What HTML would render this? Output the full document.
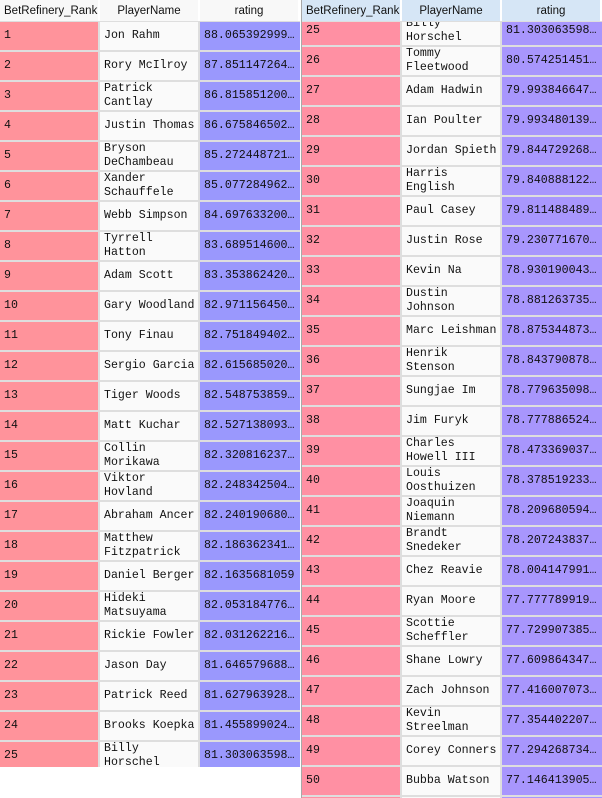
<!DOCTYPE html>
<html><head><meta charset="utf-8"><style>
*{margin:0;padding:0;box-sizing:border-box}
body{width:602px;height:798px;background:#fff;position:relative;overflow:hidden;font-family:"Liberation Mono",monospace;font-size:11.6px;color:#111}
.t{position:absolute;top:0;width:300px;overflow:hidden}
.L{left:0;height:767px}
.R{left:301px;width:301px;height:798px;border-left:1px solid #a8a8a8}
.rows{position:absolute;left:0;width:100%}
.r{display:flex;height:30px;border-bottom:2px solid #dedede}
.r div{height:28px;display:flex;align-items:center;padding-left:4px;line-height:14px;white-space:nowrap;overflow:hidden}
.a{width:100px;border-right:2px solid #dedede}
.n{width:100px;border-right:2px solid #dedede;background:#fafafa;white-space:normal!important}
.v{width:100px}
.L .a{background:#ff939b}.L .v{background:#9a98fd}
.R .a{background:#ff90a3}.R .v{background:#a896fd}
.h{position:absolute;top:0;left:0;width:100%;height:22px;display:flex;background:#f8f8f8;border-bottom:1px solid #dedede;font-family:"Liberation Sans",sans-serif;font-size:11.5px;z-index:2}
.R .h{background:#d6e6f6}
.h div{width:100px;display:flex;align-items:center;justify-content:center;border-right:2px solid #fff;white-space:nowrap;overflow:hidden}
.h div:first-child{justify-content:flex-start;padding-left:4px}
</style></head><body>
<div class="t L"><div class="h"><div>BetRefinery_Rank</div><div>PlayerName</div><div>rating</div></div>
<div class="rows" style="top:22px">
<div class="r"><div class="a">1</div><div class="n">Jon Rahm</div><div class="v">88.065392999…</div></div>
<div class="r"><div class="a">2</div><div class="n">Rory McIlroy</div><div class="v">87.851147264…</div></div>
<div class="r"><div class="a">3</div><div class="n">Patrick Cantlay</div><div class="v">86.815851200…</div></div>
<div class="r"><div class="a">4</div><div class="n">Justin Thomas</div><div class="v">86.675846502…</div></div>
<div class="r"><div class="a">5</div><div class="n">Bryson DeChambeau</div><div class="v">85.272448721…</div></div>
<div class="r"><div class="a">6</div><div class="n">Xander Schauffele</div><div class="v">85.077284962…</div></div>
<div class="r"><div class="a">7</div><div class="n">Webb Simpson</div><div class="v">84.697633200…</div></div>
<div class="r"><div class="a">8</div><div class="n">Tyrrell Hatton</div><div class="v">83.689514600…</div></div>
<div class="r"><div class="a">9</div><div class="n">Adam Scott</div><div class="v">83.353862420…</div></div>
<div class="r"><div class="a">10</div><div class="n">Gary Woodland</div><div class="v">82.971156450…</div></div>
<div class="r"><div class="a">11</div><div class="n">Tony Finau</div><div class="v">82.751849402…</div></div>
<div class="r"><div class="a">12</div><div class="n">Sergio Garcia</div><div class="v">82.615685020…</div></div>
<div class="r"><div class="a">13</div><div class="n">Tiger Woods</div><div class="v">82.548753859…</div></div>
<div class="r"><div class="a">14</div><div class="n">Matt Kuchar</div><div class="v">82.527138093…</div></div>
<div class="r"><div class="a">15</div><div class="n">Collin Morikawa</div><div class="v">82.320816237…</div></div>
<div class="r"><div class="a">16</div><div class="n">Viktor Hovland</div><div class="v">82.248342504…</div></div>
<div class="r"><div class="a">17</div><div class="n">Abraham Ancer</div><div class="v">82.240190680…</div></div>
<div class="r"><div class="a">18</div><div class="n">Matthew Fitzpatrick</div><div class="v">82.186362341…</div></div>
<div class="r"><div class="a">19</div><div class="n">Daniel Berger</div><div class="v">82.1635681059</div></div>
<div class="r"><div class="a">20</div><div class="n">Hideki Matsuyama</div><div class="v">82.053184776…</div></div>
<div class="r"><div class="a">21</div><div class="n">Rickie Fowler</div><div class="v">82.031262216…</div></div>
<div class="r"><div class="a">22</div><div class="n">Jason Day</div><div class="v">81.646579688…</div></div>
<div class="r"><div class="a">23</div><div class="n">Patrick Reed</div><div class="v">81.627963928…</div></div>
<div class="r"><div class="a">24</div><div class="n">Brooks Koepka</div><div class="v">81.455899024…</div></div>
<div class="r"><div class="a">25</div><div class="n">Billy Horschel</div><div class="v">81.303063598…</div></div>
</div></div>
<div class="t R"><div class="h"><div>BetRefinery_Rank</div><div>PlayerName</div><div>rating</div></div>
<div class="rows" style="top:17px">
<div class="r"><div class="a">25</div><div class="n">Billy Horschel</div><div class="v">81.303063598…</div></div>
<div class="r"><div class="a">26</div><div class="n">Tommy Fleetwood</div><div class="v">80.574251451…</div></div>
<div class="r"><div class="a">27</div><div class="n">Adam Hadwin</div><div class="v">79.993846647…</div></div>
<div class="r"><div class="a">28</div><div class="n">Ian Poulter</div><div class="v">79.993480139…</div></div>
<div class="r"><div class="a">29</div><div class="n">Jordan Spieth</div><div class="v">79.844729268…</div></div>
<div class="r"><div class="a">30</div><div class="n">Harris English</div><div class="v">79.840888122…</div></div>
<div class="r"><div class="a">31</div><div class="n">Paul Casey</div><div class="v">79.811488489…</div></div>
<div class="r"><div class="a">32</div><div class="n">Justin Rose</div><div class="v">79.230771670…</div></div>
<div class="r"><div class="a">33</div><div class="n">Kevin Na</div><div class="v">78.930190043…</div></div>
<div class="r"><div class="a">34</div><div class="n">Dustin Johnson</div><div class="v">78.881263735…</div></div>
<div class="r"><div class="a">35</div><div class="n">Marc Leishman</div><div class="v">78.875344873…</div></div>
<div class="r"><div class="a">36</div><div class="n">Henrik Stenson</div><div class="v">78.843790878…</div></div>
<div class="r"><div class="a">37</div><div class="n">Sungjae Im</div><div class="v">78.779635098…</div></div>
<div class="r"><div class="a">38</div><div class="n">Jim Furyk</div><div class="v">78.777886524…</div></div>
<div class="r"><div class="a">39</div><div class="n">Charles Howell III</div><div class="v">78.473369037…</div></div>
<div class="r"><div class="a">40</div><div class="n">Louis Oosthuizen</div><div class="v">78.378519233…</div></div>
<div class="r"><div class="a">41</div><div class="n">Joaquin Niemann</div><div class="v">78.209680594…</div></div>
<div class="r"><div class="a">42</div><div class="n">Brandt Snedeker</div><div class="v">78.207243837…</div></div>
<div class="r"><div class="a">43</div><div class="n">Chez Reavie</div><div class="v">78.004147991…</div></div>
<div class="r"><div class="a">44</div><div class="n">Ryan Moore</div><div class="v">77.777789919…</div></div>
<div class="r"><div class="a">45</div><div class="n">Scottie Scheffler</div><div class="v">77.729907385…</div></div>
<div class="r"><div class="a">46</div><div class="n">Shane Lowry</div><div class="v">77.609864347…</div></div>
<div class="r"><div class="a">47</div><div class="n">Zach Johnson</div><div class="v">77.416007073…</div></div>
<div class="r"><div class="a">48</div><div class="n">Kevin Streelman</div><div class="v">77.354402207…</div></div>
<div class="r"><div class="a">49</div><div class="n">Corey Conners</div><div class="v">77.294268734…</div></div>
<div class="r"><div class="a">50</div><div class="n">Bubba Watson</div><div class="v">77.146413905…</div></div>
<div class="r"><div class="a"></div><div class="n"></div><div class="v"></div></div>
</div></div>
</body></html>
